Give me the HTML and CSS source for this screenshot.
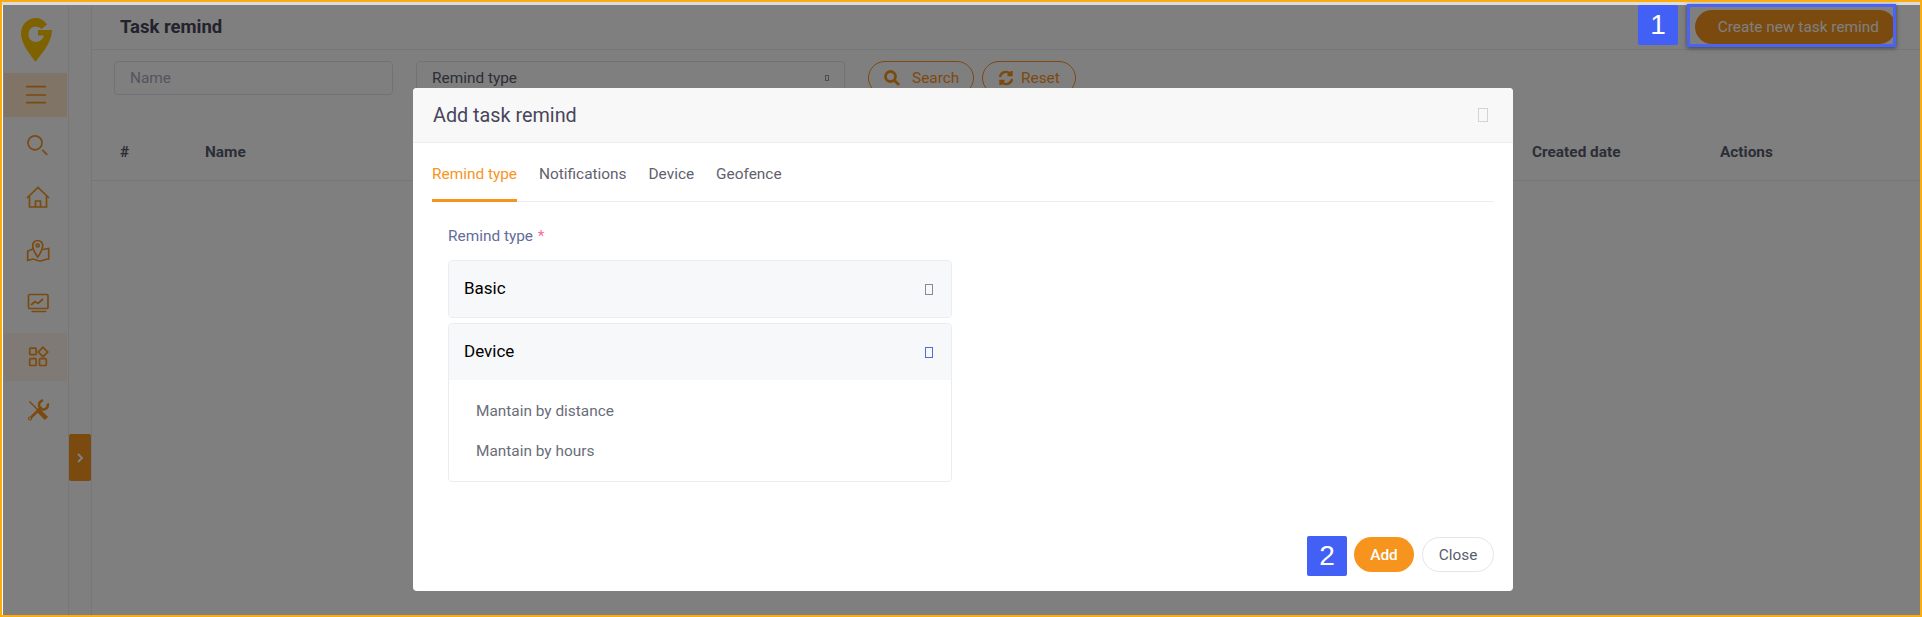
FILE: index.html
```html
<!DOCTYPE html>
<html>
<head>
	<title>Task remind</title>
	<meta charset="utf-8" />
	<link rel="stylesheet" href="styles.css">
</head>
<body>
<div class="frame">
	<div class="page">
		<aside class="sidebar">
			<div class="logo">
				<svg width="31" height="44" viewBox="0 0 31 44">
					<path d="M26 6.500C23 2.500 19.500 0 15 0 6.500 0 0 7 0 15.500 0 26 9 36 14.500 44 20 36 31 25 31 12H17v5.500h6C22 21 19 24 15 24c-4.500 0-7.500-3.500-7.500-7.500C7.500 12 10.500 8.500 15 8.500c2 0 4 1 5.500 2.500z" fill="#ffc400" />
				</svg>
			</div>
			<ul class="menu">
				<li class="menu-item first">
					<svg width="24" height="24" viewBox="0 0 24 24"><path d="M2 3.700h20M2 12h20M2 19.700h20" /></svg>
				</li>
				<li class="menu-item">
					<svg width="24" height="24" viewBox="0 0 24 24"><circle cx="9" cy="9.800" r="7" /><path d="M16.300 16.800l5 5" /></svg>
				</li>
				<li class="menu-item">
					<svg width="24" height="24" viewBox="0 0 24 24"><path d="M1 12L12 1.500 23 12M3.500 10v11h17V10M9.500 21v-6h5v6" /></svg>
				</li>
				<li class="menu-item">
					<svg width="24" height="24" viewBox="0 0 24 24"><path d="M11.700 18C8 13 6.700 10 6.700 6.500a5 5 0 0 1 10 0C16.700 10 15.400 13 11.700 18zM7 10l-5.300 2v9.500L7 20c3 .5 4 2 7 2s5-2 8.700-2V9.500L17 10.500" /><circle cx="11.700" cy="6.500" r="1.500" /></svg>
				</li>
				<li class="menu-item">
					<svg width="24" height="24" viewBox="0 0 24 24"><rect x="2.500" y="2.500" width="19.500" height="14" rx="1" /><path d="M5 13l4-3.500 3 2 5-4.500M5.500 19.500h15" /></svg>
				</li>
				<li class="menu-item current">
					<svg width="24" height="24" viewBox="0 0 24 24"><rect x="3.700" y="3.200" width="6.500" height="6.500" rx="1" /><rect x="3.700" y="13.700" width="6.500" height="6.800" rx="1" /><rect x="13.500" y="13.700" width="6.800" height="6.800" rx="1" /><path d="M17 2.300L21.700 7 17 11.700 12.300 7z" /></svg>
				</li>
				<li class="menu-item">
					<svg width="24" height="24" viewBox="0 0 24 24"><path class="thin" d="M3.500 3.500l9 9" /><path class="fat" d="M13 13l7.500 7.500" /><path class="mid" d="M15.500 9L5 19.500" /><path class="mid" d="M21.700 5.500a4.500 4.500 0 1 1-4.500-3" /><circle class="ring" cx="4" cy="20.500" r="1.500" /></svg>
				</li>
			</ul>
		</aside>
		<div class="rail">
			<button class="rail-toggle">
				<svg width="8" height="10" viewBox="0 0 8 10"><path d="M2 1l4 4-4 4" /></svg>
			</button>
		</div>
		<main class="main">
			<header class="topbar">
				<h1 class="page-title">Task remind</h1>
				<button class="btn-create">Create new task remind</button>
			</header>
			<div class="filters">
				<div class="field field-name">Name</div>
				<div class="field field-type">Remind type <span class="tofu tiny"></span></div>
				<button class="btn-outline btn-search">
					<svg width="16" height="16" viewBox="0 0 16 16"><circle cx="6.500" cy="6.500" r="5" /><path d="M10.500 10.500l4.500 4.500" /></svg>
					Search
				</button>
				<button class="btn-outline btn-reset">
					<svg width="16" height="16" viewBox="0 0 16 16"><path d="M2 7a6 6 0 0 1 10.500-3M14 9a6 6 0 0 1-10.500 3M13.500 1v4H9.500M2.500 15v-4h4" /></svg>
					Reset
				</button>
			</div>
			<div class="table-head">
				<span class="col-num">#</span>
				<span class="col-name">Name</span>
				<span class="col-date">Created date</span>
				<span class="col-actions">Actions</span>
			</div>
		</main>
	</div>

	<div class="overlay">
		<div class="modal">
			<div class="modal-head">
				<h2 class="modal-title">Add task remind</h2>
				<span class="tofu close-x"></span>
			</div>
			<div class="modal-body">
				<div class="tabs">
					<span class="tab active">Remind type</span>
					<span class="tab">Notifications</span>
					<span class="tab">Device</span>
					<span class="tab">Geofence</span>
				</div>
				<div class="form-group">
					<div class="form-label">Remind type <span class="req">*</span></div>
					<div class="panel">
						<div class="panel-head">Basic <span class="tofu"></span></div>
					</div>
					<div class="panel">
						<div class="panel-head">Device <span class="tofu blue"></span></div>
						<ul class="panel-list">
							<li>Mantain by distance</li>
							<li>Mantain by hours</li>
						</ul>
					</div>
				</div>
			</div>
			<div class="modal-foot">
				<button class="btn-add">Add</button>
				<button class="btn-close">Close</button>
			</div>
		</div>
	</div>

	<!-- step marks drawn on top of the shot -->
	<div class="mark-box"></div>
	<div class="badge badge-one">1</div>
	<div class="badge badge-two">2</div>
</div>
</body>
</html>
```

FILE: styles.css
```css
* { box-sizing: border-box; }
html, body { margin: 0; padding: 0; }
body { font-family: Roboto, "Liberation Sans", sans-serif; background: #fff; }
ul { list-style: none; margin: 0; padding: 0; }
h1, h2 { margin: 0; }
button { font-family: inherit; cursor: pointer; }

.frame {
	position: relative;
	width: 1922px;
	height: 617px;
	border: 2px solid #fbad0f;
	overflow: hidden;
	background: #dcdcdc;
}
.page { display: flex; height: 100%; padding-top: 3px; }

/* sidebar */
.sidebar { width: 67px; border-right: 1px solid #eeeef2; background: #fff; flex: none; }
.logo { height: 68px; padding: 13px 0 0 19px; }
.menu-item { display: flex; align-items: center; justify-content: center; height: 53px; padding-left: 6px; }
.menu-item svg { fill: none; stroke: #f7941d; stroke-width: 1.700; }
.menu-item .thin { stroke-width: 1.500; }
.menu-item .mid { stroke-width: 2.600; }
.menu-item .fat { stroke-width: 4.500; }
.menu-item .ring { stroke-width: 1.200; }
.menu-item.first { height: 44px; padding-left: 0; background: #ffe9cc; margin: 0 1px 1px 2px; }
.menu-item.first svg { stroke-width: 1.700; }
.menu-item.current { background: #fff5ea; height: 48px; margin: 3px 1px 2px 2px; padding-left: 4px; }

.rail { position: relative; width: 23px; border-right: 1px solid #eeeef2; background: #fff; flex: none; }
.rail-toggle {
	position: absolute; left: 0; top: 429px;
	display: flex; align-items: center; justify-content: center;
	width: 22px; height: 47px; padding: 0;
	background: #f7941d; border: none; border-radius: 2px;
}
.rail-toggle svg { fill: none; stroke: #fff; stroke-width: 2; }

/* page */
.main { flex: 1; background: #fff; }
.topbar {
	display: flex; align-items: flex-start; justify-content: space-between;
	height: 45px; padding: 5px 24px 0 28px;
	border-bottom: 1px solid #ebedf2;
}
.page-title { margin-top: 7px; font-size: 18.500px; font-weight: 700; color: #48465b; line-height: 20px; }
.btn-create {
	width: 201px; height: 34px; padding: 0 17px 0 0;
	border: none; border-radius: 17px;
	background: #f7941d; color: #fff;
	font-size: 15.400px; text-align: right;
}

.filters { display: flex; align-items: center; height: 34px; margin: 11px 0 0 22px; }
.field {
	height: 34px; border: 1px solid #e2e5ec; border-radius: 4px;
	font-size: 15.400px; line-height: 32px; padding-left: 15px; color: #a7abc3;
}
.field-name { width: 279px; margin-right: 23px; }
.field-type {
	width: 429px; margin-right: 23px; color: #595d6e;
	display: flex; justify-content: space-between; align-items: center; padding-right: 15px;
}
.btn-outline {
	display: flex; align-items: center;
	height: 34px; padding: 0 0 0 15px;
	background: transparent; border: 1px solid #f7941d; border-radius: 17px;
	color: #f7941d; font-size: 15.400px;
}
.btn-outline svg { fill: none; stroke: #f7941d; stroke-width: 2.400; }
.btn-search { width: 106px; margin-right: 8px; gap: 12px; }
.btn-search svg { stroke-width: 2.800; }
.btn-reset { width: 94px; gap: 7px; }

.table-head {
	display: flex; height: 86px; padding: 47px 0 0 28px;
	border-bottom: 1px solid #ebedf2;
	font-size: 15.400px; font-weight: 700; color: #595d6e;
}
.table-head span { line-height: 20px; }
.col-num { width: 85px; }
.col-name { width: 1327px; }
.col-date { width: 188px; }

/* dialog, over a dark backdrop */
.overlay {
	position: absolute; left: 1px; right: 0; top: 3px; bottom: 0;
	background: rgba(0, 0, 0, .5);
	padding: 83px 0 0 410px;
}
.modal {
	display: flex; flex-direction: column;
	width: 1100px; height: 503px;
	background: #fff; border-radius: 4px; overflow: hidden;
}
.modal-head {
	display: flex; align-items: center; justify-content: space-between;
	height: 55px; flex: none; padding: 0 25px 0 20px;
	background: #f8f8f8; border-bottom: 1px solid #ebedf2;
}
.modal-title { font-size: 19.800px; font-weight: 400; color: #48465b; }
.modal-body { flex: 1; padding: 0 19px; }
.tabs { display: flex; gap: 22px; height: 59px; border-bottom: 1px solid #ebedf2; }
.tab { height: 59px; padding-top: 20px; font-size: 15.400px; line-height: 22px; color: #5f616e; }
.tab.active { color: #f7941d; border-bottom: 3px solid #f7941d; }
.form-group { padding-left: 16px; }
.form-label { margin-top: 24px; font-size: 15.400px; line-height: 20px; color: #646c9a; }
.req { color: #fb6a9a; margin-left: 1px; }
.panel { width: 504px; margin-top: 5px; border: 1px solid #ebedf2; border-radius: 4px; overflow: hidden; }
.form-label + .panel { margin-top: 14px; }
.panel-head {
	display: flex; align-items: center; justify-content: space-between;
	height: 56px; padding: 0 18px 2px 15px;
	background: #f7f8fa; color: #000; font-size: 17px;
}
.panel-head .tofu { margin-top: 2px; }
.panel-list { padding: 12px 0 9px 27px; }
.panel-list li { height: 40px; font-size: 15.400px; line-height: 39px; color: #6a6d78; }

.modal-foot { display: flex; justify-content: flex-end; gap: 8px; padding: 0 19px 19px; flex: none; }
.btn-add {
	width: 60px; height: 35px; border: none; border-radius: 18px;
	background: #f7941d; color: #fff; font-size: 15.400px; font-weight: 500;
}
.btn-close {
	width: 72px; height: 35px; border: 1px solid #e2e5ec; border-radius: 18px;
	background: #fff; color: #595d6e; font-size: 15.400px;
}

/* missing icon font glyphs show as empty boxes */
.tofu { display: inline-block; width: 8px; height: 11px; border: 1px solid #8a8a95; flex: none; }
.tofu.blue { border-color: #5867dd; }
.tofu.tiny { width: 4px; height: 6px; border-color: #9a9aa8; }
.tofu.close-x { width: 10px; height: 14px; border-color: #d4d4d8; }

/* annotation marks */
.mark-box {
	position: absolute; left: 1685px; top: 2px;
	width: 209px; height: 43px;
	border: 3px solid #4a63f5;
	box-shadow: 0 1px 4px rgba(0, 0, 0, .5);
}
.badge {
	position: absolute;
	display: flex; align-items: center; justify-content: center;
	width: 40px; height: 40px;
	background: #425ff6; color: #fff; border-radius: 2px;
	font-family: "Liberation Sans", sans-serif; font-size: 28px;
}
.badge-one { left: 1636px; top: 3px; }
.badge-two { left: 1305px; top: 534px; }
```
